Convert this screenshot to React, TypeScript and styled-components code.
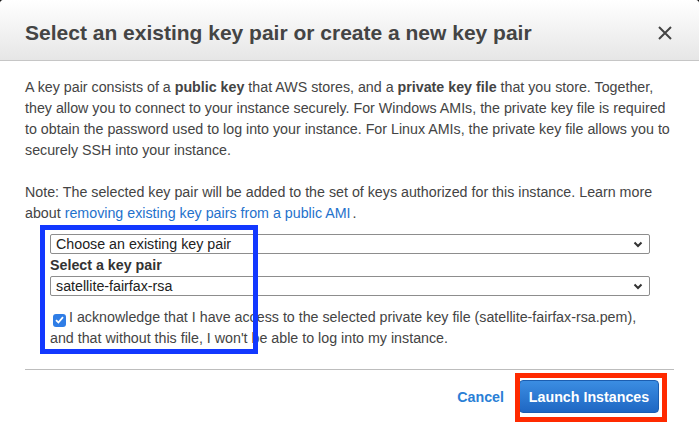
import React from "react";
import styled, { createGlobalStyle } from "styled-components";

const Global = createGlobalStyle`
  html, body, #root { margin: 0; padding: 0; height: 100%; }
  body { background: #1a1a1a; font-family: "Liberation Sans", Arial, Helvetica, sans-serif; }
  * { box-sizing: border-box; }
`;

const Modal = styled.div`
  position: relative;
  height: 433px;
  background: #fff;
  border-radius: 4px 4px 0 0;
  display: flex;
  flex-direction: column;
  overflow: hidden;
`;

const Header = styled.header`
  height: 61px;
  flex: none;
  display: flex;
  align-items: center;
  justify-content: space-between;
  padding: 5px 27px 0 25px;
  background: linear-gradient(#ffffff, #e6e6e6);
  border-bottom: 1px solid #c6c6c6;
`;

const Title = styled.h2`
  margin: 0;
  font-size: 21px;
  font-weight: 700;
  color: #444;
  letter-spacing: 0;
`;

const Close = styled.button`
  border: 0;
  background: none;
  padding: 0;
  width: 14px;
  height: 14px;
  display: flex;
  cursor: pointer;
`;

const Body = styled.div`
  padding: 16px 25px 0;
  font-size: 14.25px;
  line-height: 21px;
  color: #444;
`;

const Para = styled.p<{ $gap?: number }>`
  margin: 0 0 ${(p) => p.$gap ?? 0}px;
  white-space: nowrap;
`;

const Link = styled.a`
  color: #1f72cc;
  text-decoration: none;
  margin-left: 4px;
  margin-right: 2px;
`;

const Form = styled.div`
  margin: 10px 0 0 25px;
  width: 600px;
  display: flex;
  flex-direction: column;
`;

const SelectBox = styled.div`
  height: 20px;
  border: 1px solid #8d8d8d;
  border-radius: 2px;
  display: flex;
  align-items: center;
  justify-content: space-between;
  padding: 0 6px 0 5px;
  font-size: 14.25px;
  color: #222;
  background: #fff;
`;

const Label = styled.div`
  font-weight: 700;
  color: #333;
  font-size: 14.25px;
  line-height: 22px;
`;

const Ack = styled.div`
  margin-top: 11px;
  line-height: 21px;
  color: #444;
  white-space: nowrap;
`;

const Check = styled.span`
  display: inline-flex;
  vertical-align: -2px;
  width: 13px;
  height: 13px;
  margin: 0 3px 0 3px;
  border-radius: 3px;
  background: #2f7de6;
  align-items: center;
  justify-content: center;
`;

const Footer = styled.footer`
  margin: 20px 25px 0;
  border-top: 1px solid #bdbdbd;
  padding: 10px 15px 0 0;
  display: flex;
  justify-content: flex-end;
  align-items: center;
  gap: 15px;
`;

const Cancel = styled.a`
  color: #2a7fd6;
  font-weight: 700;
  font-size: 14.25px;
  text-decoration: none;
`;

const Primary = styled.button`
  width: 140px;
  height: 33px;
  border: 1px solid #1b5db0;
  border-radius: 4px;
  background: linear-gradient(#3b8de2, #1f67c3);
  color: #fff;
  font-family: inherit;
  font-weight: 700;
  font-size: 14.25px;
  padding: 0;
`;

const Highlight = styled.div<{ $color: string }>`
  position: absolute;
  border: 5px solid ${(p) => p.$color};
  pointer-events: none;
`;

const Chevron = () => (
  <svg width="10" height="7" viewBox="0 0 10 7">
    <polyline points="1.5,1.5 5,5 8.5,1.5" fill="none" stroke="#333" strokeWidth="2" />
  </svg>
);

export default function App() {
  return (
    <>
      <Global />
      <Modal>
        <Header>
          <Title>Select an existing key pair or create a new key pair</Title>
          <Close aria-label="Close">
            <svg width="14" height="14" viewBox="0 0 14 14">
              <path d="M1 1 L13 13 M13 1 L1 13" stroke="#444" strokeWidth="2" />
            </svg>
          </Close>
        </Header>
        <Body>
          <Para $gap={21}>
            A key pair consists of a <b>public key</b> that AWS stores, and a <b>private key file</b> that you store. Together,
            <br />
            they allow you to connect to your instance securely. For Windows AMIs, the private key file is required
            <br />
            to obtain the password used to log into your instance. For Linux AMIs, the private key file allows you to
            <br />
            securely SSH into your instance.
          </Para>
          <Para>
            Note: The selected key pair will be added to the set of keys authorized for this instance. Learn more
            <br />
            about<Link href="#">removing existing key pairs from a public AMI</Link>.
          </Para>
          <Form>
            <SelectBox>
              <span>Choose an existing key pair</span>
              <Chevron />
            </SelectBox>
            <Label>Select a key pair</Label>
            <SelectBox>
              <span>satellite-fairfax-rsa</span>
              <Chevron />
            </SelectBox>
            <Ack>
              <Check>
                <svg width="9" height="8" viewBox="0 0 9 8">
                  <polyline points="1,4.2 3.4,6.5 8,1.2" fill="none" stroke="#fff" strokeWidth="1.8" />
                </svg>
              </Check>
              I acknowledge that I have access to the selected private key file (satellite-fairfax-rsa.pem),
              <br />
              and that without this file, I won't be able to log into my instance.
            </Ack>
          </Form>
        </Body>
        <Footer>
          <Cancel href="#">Cancel</Cancel>
          <Primary>Launch Instances</Primary>
        </Footer>
        <Highlight $color="#1238ff" style={{ left: 40, top: 225, width: 218, height: 129 }} />
        <Highlight $color="#ff2a00" style={{ left: 515, top: 373, width: 152, height: 49 }} />
      </Modal>
    </>
  );
}
